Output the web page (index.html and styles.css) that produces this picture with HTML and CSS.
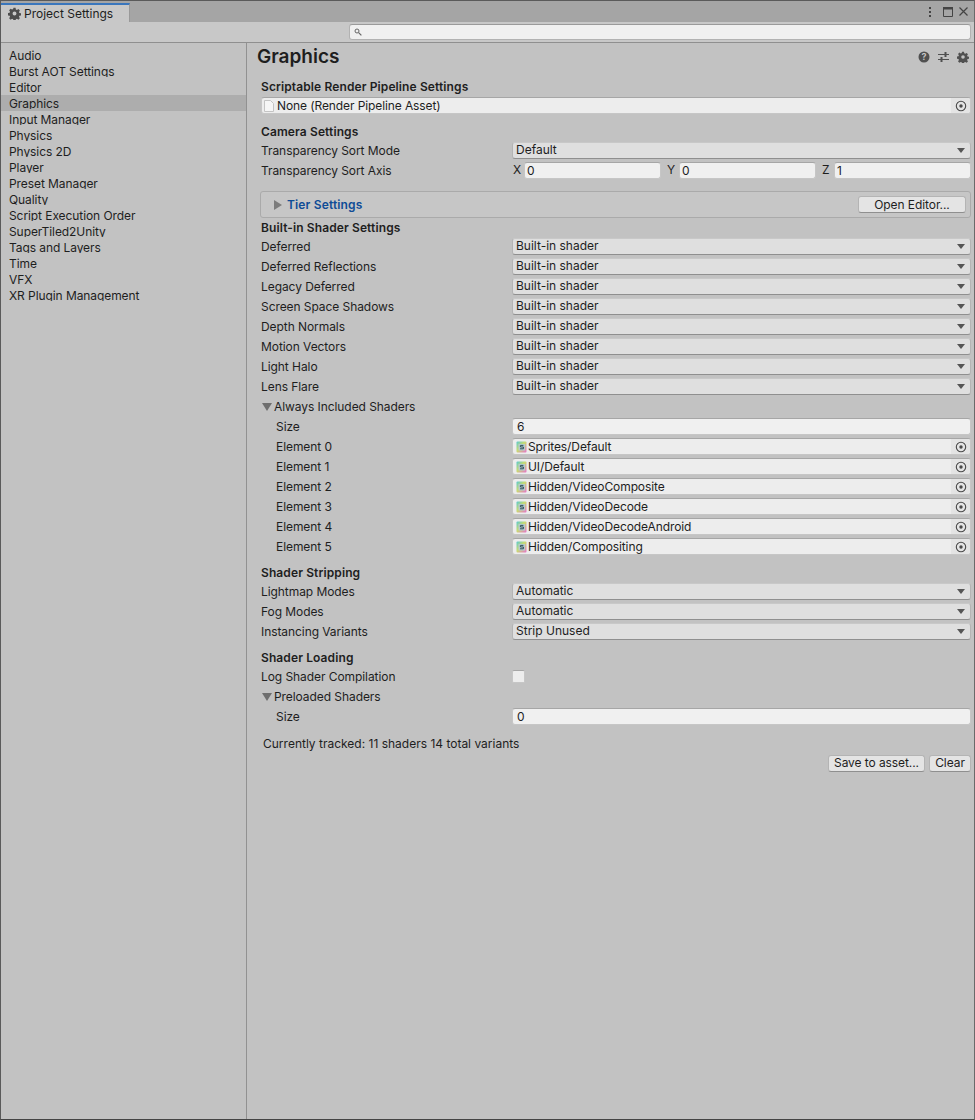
FILE: index.html
```html
<!DOCTYPE html>
<html lang="en">
<head>
  <meta charset="UTF-8" />
  <title>Project Settings</title>
  <link rel="stylesheet" href="styles.css">
</head>
<body>
  <svg class="defs" width="0" height="0">
    <defs>
      <linearGradient id="shader-grad" x1="0" y1="0" x2="1" y2="1">
        <stop offset="0" stop-color="#58c8d4" />
        <stop offset="0.45" stop-color="#c8dc70" />
        <stop offset="1" stop-color="#e870cc" />
      </linearGradient>
      <symbol id="gear" viewBox="0 0 16 16">
        <path fill-rule="evenodd" d="M6.7 1h2.6l.4 2 1.3.6 1.8-1.1 1.8 1.8-1.1 1.8.5 1.3 2 .4v2.6l-2 .4-.5 1.3 1.1 1.8-1.8 1.8-1.8-1.1-1.3.5-.4 2H6.7l-.4-2-1.3-.5-1.8 1.1-1.8-1.8 1.1-1.8-.5-1.3-2-.4V7.4l2-.4.5-1.3-1.1-1.8 1.8-1.8 1.8 1.1 1.3-.6zM8 5.6a2.4 2.4 0 1 0 0 4.8 2.4 2.4 0 0 0 0-4.8z" />
      </symbol>
      <symbol id="target" viewBox="0 0 12 12">
        <circle cx="6" cy="6" r="4.7" fill="none" stroke="#4a4a4a" stroke-width="1.1" />
        <circle cx="6" cy="6" r="1.7" fill="#4a4a4a" />
      </symbol>
      <symbol id="shader" viewBox="0 0 11 12">
        <rect x="0.5" y="0.5" width="10" height="11" rx="1" fill="url(#shader-grad)" />
        <rect x="2.5" y="3" width="6.5" height="6.5" fill="#b4ccd0" />
        <path d="M7.4 4.4H4.4v1.6h3v1.8H4" fill="none" stroke="#34505a" stroke-width="1" />
      </symbol>
    </defs>
  </svg>

  <div class="window">
    <div class="tabbar">
      <div class="tab">
        <svg class="tab-gear" width="13" height="13"><use href="#gear" /></svg>
        <span>Project Settings</span>
      </div>
      <div class="win-buttons">
        <svg class="win-menu" width="4" height="12" viewBox="0 0 4 12"><rect x="1" y="1" width="2" height="2" /><rect x="1" y="5" width="2" height="2" /><rect x="1" y="9" width="2" height="2" /></svg>
        <svg class="win-max" width="10" height="10" viewBox="0 0 10 10"><path d="M.5.5h9v9H.5z" fill="none" stroke="#444" /><rect width="10" height="2.5" /></svg>
        <svg class="win-close" width="9" height="9" viewBox="0 0 9 9"><path d="M.5.5l8 8M8.5.5l-8 8" fill="none" stroke="#444" stroke-width="1.2" /></svg>
      </div>
    </div>

    <div class="toolbar">
      <div class="search">
        <svg width="8" height="8" viewBox="0 0 8 8"><circle cx="3" cy="3" r="2" fill="none" stroke="#666" /><path d="M4.6 4.6L7.4 7.4" stroke="#666" stroke-width="1.2" /></svg>
      </div>
    </div>

    <div class="panes">
      <nav class="sidebar">
        <div class="nav-item"><span>Audio</span></div>
        <div class="nav-item"><span>Burst AOT Settings</span></div>
        <div class="nav-item"><span>Editor</span></div>
        <div class="nav-item active"><span>Graphics</span></div>
        <div class="nav-item"><span>Input Manager</span></div>
        <div class="nav-item"><span>Physics</span></div>
        <div class="nav-item"><span>Physics 2D</span></div>
        <div class="nav-item"><span>Player</span></div>
        <div class="nav-item"><span>Preset Manager</span></div>
        <div class="nav-item"><span>Quality</span></div>
        <div class="nav-item"><span>Script Execution Order</span></div>
        <div class="nav-item"><span>SuperTiled2Unity</span></div>
        <div class="nav-item"><span>Tags and Layers</span></div>
        <div class="nav-item"><span>Time</span></div>
        <div class="nav-item"><span>VFX</span></div>
        <div class="nav-item"><span>XR Plugin Management</span></div>
      </nav>

      <main class="content">
        <div class="title-row">
          <h1>Graphics</h1>
          <div class="title-icons">
            <svg width="12" height="12" viewBox="0 0 12 12"><circle cx="6" cy="6" r="5.5" fill="#505050" /><text x="6" y="9.2" text-anchor="middle" class="help-mark">?</text></svg>
            <svg width="13" height="12" viewBox="0 0 13 12"><path d="M1 3.5h11M1 8.5h11" stroke="#505050" stroke-width="1.2" /><path d="M8.5 1v5M4.5 6v5" stroke="#505050" stroke-width="2" /></svg>
            <svg width="12" height="12"><use href="#gear" /></svg>
          </div>
        </div>

        <h2 class="heading first">Scriptable Render Pipeline Settings</h2>
        <div class="object-field wide">
          <svg class="doc" width="10" height="12" viewBox="0 0 10 12"><path d="M.5.5h6l3 3v8H.5z" fill="#f6f6f6" stroke="#c4c4c4" /></svg>
          <span class="object-name">None (Render Pipeline Asset)</span>
          <span class="picker"><svg width="12" height="12"><use href="#target" /></svg></span>
        </div>

        <h2 class="heading gap">Camera Settings</h2>
        <div class="row">
          <label>Transparency Sort Mode</label>
          <div class="dropdown">Default</div>
        </div>
        <div class="row">
          <label>Transparency Sort Axis</label>
          <div class="axis">
            <span class="axis-name">X</span><div class="input">0</div>
            <span class="axis-name">Y</span><div class="input">0</div>
            <span class="axis-name">Z</span><div class="input">1</div>
          </div>
        </div>

        <div class="tier-box">
          <div class="tier-title"><i class="tri-right"></i>Tier Settings</div>
          <button class="btn open-editor">Open Editor...</button>
        </div>

        <h2 class="heading tall">Built-in Shader Settings</h2>
        <div class="row"><label>Deferred</label><div class="dropdown">Built-in shader</div></div>
        <div class="row"><label>Deferred Reflections</label><div class="dropdown">Built-in shader</div></div>
        <div class="row"><label>Legacy Deferred</label><div class="dropdown">Built-in shader</div></div>
        <div class="row"><label>Screen Space Shadows</label><div class="dropdown">Built-in shader</div></div>
        <div class="row"><label>Depth Normals</label><div class="dropdown">Built-in shader</div></div>
        <div class="row"><label>Motion Vectors</label><div class="dropdown">Built-in shader</div></div>
        <div class="row"><label>Light Halo</label><div class="dropdown">Built-in shader</div></div>
        <div class="row"><label>Lens Flare</label><div class="dropdown">Built-in shader</div></div>

        <div class="row"><label class="foldout"><i class="tri-down"></i>Always Included Shaders</label></div>
        <div class="row"><label class="indent">Size</label><div class="input">6</div></div>
        <div class="row"><label class="indent">Element 0</label><div class="object-field"><svg class="shader-icon" width="11" height="12"><use href="#shader" /></svg><span class="object-name">Sprites/Default</span><span class="picker"><svg width="12" height="12"><use href="#target" /></svg></span></div></div>
        <div class="row"><label class="indent">Element 1</label><div class="object-field"><svg class="shader-icon" width="11" height="12"><use href="#shader" /></svg><span class="object-name">UI/Default</span><span class="picker"><svg width="12" height="12"><use href="#target" /></svg></span></div></div>
        <div class="row"><label class="indent">Element 2</label><div class="object-field"><svg class="shader-icon" width="11" height="12"><use href="#shader" /></svg><span class="object-name">Hidden/VideoComposite</span><span class="picker"><svg width="12" height="12"><use href="#target" /></svg></span></div></div>
        <div class="row"><label class="indent">Element 3</label><div class="object-field"><svg class="shader-icon" width="11" height="12"><use href="#shader" /></svg><span class="object-name">Hidden/VideoDecode</span><span class="picker"><svg width="12" height="12"><use href="#target" /></svg></span></div></div>
        <div class="row"><label class="indent">Element 4</label><div class="object-field"><svg class="shader-icon" width="11" height="12"><use href="#shader" /></svg><span class="object-name">Hidden/VideoDecodeAndroid</span><span class="picker"><svg width="12" height="12"><use href="#target" /></svg></span></div></div>
        <div class="row"><label class="indent">Element 5</label><div class="object-field"><svg class="shader-icon" width="11" height="12"><use href="#shader" /></svg><span class="object-name">Hidden/Compositing</span><span class="picker"><svg width="12" height="12"><use href="#target" /></svg></span></div></div>

        <h2 class="heading gap">Shader Stripping</h2>
        <div class="row"><label>Lightmap Modes</label><div class="dropdown">Automatic</div></div>
        <div class="row"><label>Fog Modes</label><div class="dropdown">Automatic</div></div>
        <div class="row"><label>Instancing Variants</label><div class="dropdown">Strip Unused</div></div>

        <h2 class="heading gap">Shader Loading</h2>
        <div class="row"><label>Log Shader Compilation</label><div class="checkbox"></div></div>
        <div class="row"><label class="foldout"><i class="tri-down"></i>Preloaded Shaders</label></div>
        <div class="row"><label class="indent">Size</label><div class="input">0</div></div>

        <p class="tracked">Currently tracked: 11 shaders 14 total variants</p>
        <div class="actions">
          <button class="btn save">Save to asset...</button>
          <button class="btn clear">Clear</button>
        </div>
      </main>
    </div>
  </div>
</body>
</html>
```

FILE: styles.css
```css
* {
  box-sizing: border-box;
  margin: 0;
  padding: 0;
  font-family: Inter, 'Liberation Sans', sans-serif;
}

html, body {
  height: 100%;
  overflow: hidden;
}

body {
  background-color: #c2c2c2;
  color: #1e1e1e;
  font-size: 12px;
}

.defs {
  position: absolute;
}

.window {
  display: flex;
  flex-direction: column;
  height: 1120px;
  border: 1px solid #5a5a5a;
  border-right-color: #6a6a6a;
  border-bottom-color: #444;
}

/* title bar */
.tabbar {
  display: flex;
  justify-content: space-between;
  height: 21px;
  padding-top: 2px;
  background-color: #a5a5a5;
  flex-shrink: 0;
}

.tab {
  display: flex;
  align-items: center;
  gap: 3px;
  width: 129px;
  padding-left: 7px;
  background-color: #c8c8c8;
  border-top: 2px solid #3a76bc;
  border-right: 1px solid #999;
}

.tab-gear {
  fill: #4d4d4d;
}

.win-buttons {
  display: flex;
  align-items: center;
  padding-right: 6px;
  padding-bottom: 2px;
}

.win-buttons svg {
  fill: #444;
}

.win-max {
  margin-left: 11px;
}

.win-close {
  margin-left: 6px;
}

.toolbar {
  display: flex;
  justify-content: flex-end;
  align-items: center;
  height: 21px;
  padding-right: 3px;
  background-color: #c8c8c8;
  border-bottom: 1px solid #8f8f8f;
  flex-shrink: 0;
}

.search {
  display: flex;
  align-items: center;
  width: 622px;
  height: 16px;
  padding-left: 4px;
  background-color: #f0f0f0;
  border: 1px solid #b2b2b2;
  border-top-color: #9a9a9a;
  border-radius: 3px;
}

.panes {
  display: flex;
  flex: 1;
  min-height: 0;
}

/* left list */
.sidebar {
  width: 246px;
  padding-top: 4px;
  border-right: 1px solid #919191;
  flex-shrink: 0;
}

.nav-item {
  height: 16px;
  padding: 1px 0 0 8px;
  line-height: 16px;
  letter-spacing: -0.08px;
}

.nav-item span {
  display: block;
  height: 13px;
  overflow: hidden;
}

.nav-item.active {
  background-color: #adadad;
}

/* right side */
.content {
  display: flex;
  flex-direction: column;
  flex: 1;
  min-width: 0;
  padding: 0 3px 0 14px;
}

.title-row {
  display: flex;
  justify-content: space-between;
  align-items: center;
  height: 30px;
  margin-left: -4px;
  padding-bottom: 2px;
}

h1 {
  font-size: 19px;
  font-weight: 600;
  line-height: 24px;
}

.title-icons {
  display: flex;
  align-items: center;
  gap: 7px;
  padding-right: 2px;
  fill: #505050;
}

.help-mark {
  fill: #c2c2c2;
  font-size: 9px;
  font-weight: 700;
}

.heading {
  height: 18px;
  font-size: 12px;
  font-weight: 600;
  line-height: 18px;
  letter-spacing: 0.11px;
}

.heading.first {
  margin-top: 5px;
}

.heading.gap {
  margin-top: 7px;
}

.heading.tall {
  height: 19px;
  line-height: 20px;
}

.row {
  display: grid;
  grid-template-columns: 251px 1fr;
  align-items: center;
  height: 20px;
  flex-shrink: 0;
}

.row label {
  line-height: 20px;
  padding-bottom: 1px;
  letter-spacing: -0.07px;
}

.row label.indent {
  padding-left: 15px;
}

.foldout {
  display: flex;
  align-items: center;
}

.tri-down {
  width: 0;
  height: 0;
  margin: 0 2px 0 1px;
  border-left: 5px solid transparent;
  border-right: 5px solid transparent;
  border-top: 8px solid #6e6e6e;
}

.tri-right {
  display: inline-block;
  width: 0;
  height: 0;
  margin-right: 5px;
  border-top: 5px solid transparent;
  border-bottom: 5px solid transparent;
  border-left: 8px solid #7c7c7c;
}

.dropdown {
  position: relative;
  align-self: start;
  height: 17px;
  margin-top: 1px;
  padding-left: 3px;
  line-height: 13px;
  background-color: #dfdfdf;
  border: 1px solid #b4b4b4;
  border-top-color: #c8c8c8;
  border-bottom-color: #8f8f8f;
  border-radius: 3px;
}

/* the arrow sits on top of the dropdown */
.dropdown::after {
  content: "";
  position: absolute;
  right: 5px;
  top: 5px;
  border-left: 4px solid transparent;
  border-right: 4px solid transparent;
  border-top: 5px solid #555;
}

.input {
  align-self: start;
  height: 17px;
  margin-top: 1px;
  padding-left: 4px;
  line-height: 15px;
  background-color: #f0f0f0;
  border: 1px solid #c6c6c6;
  border-top-color: #a6a6a6;
  border-radius: 3px;
}

.axis {
  display: flex;
  align-self: start;
}

.axis .input {
  flex: 1;
  padding-left: 2px;
}

.axis-name {
  width: 12px;
  margin-left: 6px;
  line-height: 18px;
}

.axis-name:first-child {
  margin-left: 0;
  padding-left: 1px;
}

.object-field {
  display: flex;
  align-items: center;
  align-self: start;
  height: 17px;
  margin-top: 1px;
  padding-left: 3px;
  letter-spacing: -0.1px;
  background-color: #ededed;
  border: 1px solid #c6c6c6;
  border-top-color: #a6a6a6;
  border-radius: 3px;
  overflow: hidden;
}

.object-field.wide {
  align-self: stretch;
  margin: 1px 0 2px;
  padding-left: 2px;
  flex-shrink: 0;
}

.doc {
  margin-right: 3px;
  flex-shrink: 0;
}

.shader-icon {
  margin: 1px 1px 0 0;
  flex-shrink: 0;
}

.object-name {
  flex: 1;
}

.picker {
  display: flex;
  align-items: center;
  justify-content: center;
  width: 19px;
  height: 100%;
  background-color: #e4e4e4;
}

.tier-box {
  display: flex;
  justify-content: space-between;
  align-items: center;
  height: 27px;
  margin: 10px 0 0 -1px;
  padding: 0 4px 0 13px;
  background-color: #c6c6c6;
  border: 1px solid #aaa;
  border-radius: 3px;
  flex-shrink: 0;
}

.tier-title {
  display: flex;
  align-items: center;
  color: #0f4c96;
  font-weight: 600;
  letter-spacing: 0.15px;
}

.btn {
  height: 17px;
  padding: 0 0 2px;
  color: #1e1e1e;
  font-size: 12px;
  line-height: 13px;
  letter-spacing: -0.08px;
  white-space: nowrap;
  background-color: #e4e4e4;
  border: 1px solid #b4b4b4;
  border-bottom-color: #8f8f8f;
  border-radius: 3px;
}

.open-editor {
  width: 108px;
  padding-bottom: 0;
}

.checkbox {
  width: 13px;
  height: 13px;
  margin-top: -2px;
  background-color: #ededed;
  border: 1px solid #c6c6c6;
  border-top-color: #a6a6a6;
  border-radius: 2px;
}

.tracked {
  height: 20px;
  margin-top: 7px;
  padding-left: 2px;
  line-height: 20px;
}

.actions {
  display: flex;
  justify-content: flex-end;
  gap: 4px;
  margin-top: 1px;
}

.save {
  width: 97px;
}

.clear {
  width: 42px;
}
```
